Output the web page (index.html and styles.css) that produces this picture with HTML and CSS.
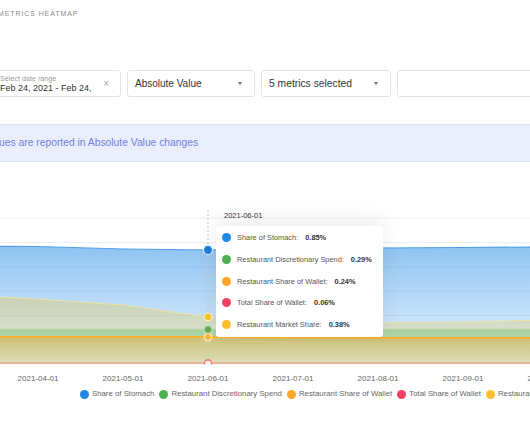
FILE: index.html
```html
<!DOCTYPE html>
<html lang="en">
<head>
  <meta charset="UTF-8" />
  <title>Metrics Heatmap</title>
  <link rel="stylesheet" href="styles.css">
</head>
<body>
  <div class="page">
    <div class="title">METRICS HEATMAP</div>

    <div class="filters">
      <div class="field date-field">
        <div class="date-text">
          <div class="field-label">Select date range</div>
          <div class="date-value">Feb 24, 2021 - Feb 24, 2022</div>
        </div>
        <span class="clear">×</span>
      </div>
      <div class="field select-field value-field">
        <span>Absolute Value</span>
        <span class="caret"></span>
      </div>
      <div class="field select-field metrics-field">
        <span>5 metrics selected</span>
        <span class="caret"></span>
      </div>
      <div class="field empty-field"></div>
    </div>

    <div class="banner">Values are reported in Absolute Value changes</div>

    <div class="chart">
      <svg class="chart-svg" viewBox="-30 195 560 195" width="560" height="195">
        <defs>
          <linearGradient id="gBlue" gradientUnits="userSpaceOnUse" x1="0" y1="246" x2="0" y2="364">
            <stop offset="0" stop-color="#1e88e5" stop-opacity="0.5"/>
            <stop offset="1" stop-color="#1e88e5" stop-opacity="0.08"/>
          </linearGradient>
          <linearGradient id="gYellow" gradientUnits="userSpaceOnUse" x1="0" y1="295" x2="0" y2="364">
            <stop offset="0" stop-color="#e9c640" stop-opacity="0.36"/>
            <stop offset="1" stop-color="#e9c640" stop-opacity="0.15"/>
          </linearGradient>
          <linearGradient id="gGreen" gradientUnits="userSpaceOnUse" x1="0" y1="328" x2="0" y2="364">
            <stop offset="0" stop-color="#4caf50" stop-opacity="0.35"/>
            <stop offset="1" stop-color="#4caf50" stop-opacity="0.1"/>
          </linearGradient>
          <linearGradient id="gOrange" gradientUnits="userSpaceOnUse" x1="0" y1="337" x2="0" y2="364">
            <stop offset="0" stop-color="#ffa726" stop-opacity="0.38"/>
            <stop offset="1" stop-color="#ffa726" stop-opacity="0.12"/>
          </linearGradient>
          <clipPath id="plot">
            <rect x="-30" y="200" width="560" height="164.5"/>
          </clipPath>
        </defs>

        <g class="grid">
          <line x1="-30" x2="530" y1="218" y2="218"/>
          <line x1="-30" x2="530" y1="242.5" y2="242.5"/>
          <line x1="-30" x2="530" y1="267" y2="267"/>
          <line x1="-30" x2="530" y1="291" y2="291"/>
          <line x1="-30" x2="530" y1="315.5" y2="315.5"/>
          <line x1="-30" x2="530" y1="340" y2="340"/>
        </g>

        <!-- share of stomach -->
        <path fill="url(#gBlue)" d="M-50 246 L38 246.5 L123 249 L208 250 L293 249 L378 248 L463 247.5 L548 247 L548 364 L-50 364 Z"/>
        <path class="line" stroke="#4f9ded" stroke-width="1.2" d="M-50 246 L38 246.5 L123 249 L208 250 L293 249 L378 248 L463 247.5 L548 247"/>

        <!-- restaurant market share -->
        <path fill="url(#gYellow)" d="M-50 294 L38 299 L123 305 L208 317 L293 322 L378 323 L463 322 L548 320 L548 364 L-50 364 Z"/>
        <path class="line" stroke="#ece3a6" stroke-width="1" d="M-50 294 L38 299 L123 305 L208 317 L293 322 L378 323 L463 322 L548 320"/>

        <!-- restaurant discretionary spend -->
        <path fill="url(#gGreen)" d="M-50 329 L548 329 L548 364 L-50 364 Z"/>
        <path class="line" stroke="#c3dcae" stroke-width="1" d="M-50 329 L548 329"/>

        <!-- restaurant share of wallet -->
        <path fill="url(#gOrange)" d="M-50 337 L208 337 L378 338 L548 338 L548 364 L-50 364 Z"/>
        <path class="line" stroke="#f6b12f" stroke-width="2" d="M-50 337 L208 337 L378 338 L548 338"/>

        <!-- total share of wallet -->
        <path class="line" stroke="#efa58f" stroke-width="1.5" d="M-50 363 L548 363"/>

        <line class="pointer" x1="208" x2="208" y1="210" y2="364"/>

        <g clip-path="url(#plot)">
          <circle cx="208" cy="363.5" r="3.6" fill="#fff" stroke="#f27a6f" stroke-width="1.6"/>
        </g>
        <circle cx="208" cy="337" r="4.5" fill="#fbe3a6"/>
        <circle cx="208" cy="337" r="2.8" fill="#f5b53a"/>
        <circle cx="208" cy="329.5" r="4" fill="#6caa58" stroke="#d4e6c2" stroke-width="1"/>
        <circle cx="208" cy="317" r="4.5" fill="#faeebb"/>
        <circle cx="208" cy="317" r="3.2" fill="#f3c531"/>
        <circle cx="208" cy="250" r="4.5" fill="#1e7fe0" stroke="#e4f0fc" stroke-width="1.2"/>

        <g class="axis-labels">
          <text x="38" y="381">2021-04-01</text>
          <text x="123" y="381">2021-05-01</text>
          <text x="208" y="381">2021-06-01</text>
          <text x="293" y="381">2021-07-01</text>
          <text x="378" y="381">2021-08-01</text>
          <text x="463" y="381">2021-09-01</text>
          <text x="548" y="381">2021-10-01</text>
        </g>
      </svg>

      <div class="tooltip">
        <div class="tooltip-date">2021-06-01</div>
        <div class="tooltip-body">
          <div class="tip-row"><span class="dot blue"></span>Share of Stomach:<b>0.85%</b></div>
          <div class="tip-row"><span class="dot green"></span>Restaurant Discretionary Spend:<b>0.29%</b></div>
          <div class="tip-row"><span class="dot orange"></span>Restaurant Share of Wallet:<b>0.24%</b></div>
          <div class="tip-row"><span class="dot red"></span>Total Share of Wallet:<b>0.06%</b></div>
          <div class="tip-row"><span class="dot yellow"></span>Restaurant Market Share:<b>0.38%</b></div>
        </div>
      </div>
    </div>

    <div class="legend">
      <div class="legend-item"><span class="dot blue"></span>Share of Stomach</div>
      <div class="legend-item"><span class="dot green"></span>Restaurant Discretionary Spend</div>
      <div class="legend-item"><span class="dot orange"></span>Restaurant Share of Wallet</div>
      <div class="legend-item"><span class="dot red"></span>Total Share of Wallet</div>
      <div class="legend-item"><span class="dot yellow"></span>Restaurant Market Share</div>
    </div>
  </div>
</body>
</html>
```

FILE: styles.css
```css
body {
  margin: 0;
  background: #fff;
  font-family: 'Liberation Sans', Arial, sans-serif;
  color: #333;
  overflow: hidden;
}

.page {
  width: 560px;
  margin-left: -30px;
}

.title {
  padding: 9px 0 0 28px;
  font-size: 7px;
  line-height: 9px;
  letter-spacing: 0.9px;
  color: #8a8a8a;
}

.filters {
  display: flex;
  gap: 6px;
  margin-top: 52px;
  height: 27px;
}

.field {
  flex: none;
  box-sizing: border-box;
  height: 27px;
  border: 1px solid #e3e3e3;
  border-radius: 3px;
  background: #fff;
  display: flex;
  align-items: center;
}

.date-field {
  width: 151px;
  padding-left: 29px;
  padding-right: 11px;
}

.date-text {
  width: 93px;
  overflow: hidden;
  white-space: nowrap;
}

.field-label {
  font-size: 7.2px;
  line-height: 8px;
  color: #9a9a9a;
}

.date-value {
  font-size: 9px;
  line-height: 10px;
  color: #333;
}

.clear {
  margin-left: auto;
  font-size: 10px;
  color: #a8a8a8;
}

.select-field {
  padding: 0 12px 0 7px;
  font-size: 10px;
  color: #333;
  justify-content: space-between;
}

.value-field {
  width: 128px;
}

.metrics-field {
  width: 130px;
  font-size: 10.3px;
}

.empty-field {
  width: 150px;
}

.caret {
  width: 0;
  height: 0;
  border-left: 2.5px solid transparent;
  border-right: 2.5px solid transparent;
  border-top: 3px solid #6a6a6a;
}

.banner {
  margin-top: 27px;
  height: 36px;
  line-height: 36px;
  background: #eaeefb;
  border-top: 1px solid #d8dff6;
  border-bottom: 1px solid #d8dff6;
  padding-left: 15px;
  font-size: 10.3px;
  color: #6f80e0;
}

.chart {
  position: relative;
  margin-top: 33px;
  height: 195px;
}

.chart-svg {
  display: block;
}

.grid line {
  stroke: #eceef3;
  stroke-width: 1;
}

.line {
  fill: none;
}

.pointer {
  stroke: #c9c9c9;
  stroke-width: 1;
  stroke-dasharray: 2 2;
}

.axis-labels text {
  font-family: 'Liberation Sans', Arial, sans-serif;
  font-size: 8px;
  fill: #666;
  text-anchor: middle;
}

.tooltip {
  position: absolute;
  left: 246px;
  top: 10px;
  width: 167px;
}

.tooltip-date {
  height: 21px;
  line-height: 21px;
  padding-left: 8px;
  font-size: 7.5px;
  color: #333;
}

.tooltip-body {
  box-sizing: border-box;
  width: 167px;
  height: 111px;
  padding: 1px 0 0 5.5px;
  background: #fff;
  border-radius: 3px;
  box-shadow: 0 -6px 22px rgba(0, 0, 0, 0.08);
}

.tip-row {
  display: flex;
  align-items: center;
  height: 21.7px;
  font-size: 7.4px;
  color: #555;
  white-space: nowrap;
}

.tip-row .dot {
  margin-right: 6.5px;
}

.tip-row b {
  margin-left: 7px;
  color: #333;
}

.dot {
  flex: none;
  width: 9px;
  height: 9px;
  border-radius: 50%;
}

.dot.blue { background: #1e88e5; }
.dot.green { background: #4caf50; }
.dot.orange { background: #ffa726; }
.dot.red { background: #f0415e; }
.dot.yellow { background: #fbc02d; }

.legend {
  display: flex;
  gap: 5px;
  padding-left: 110px;
  margin-top: -1px;
  height: 10px;
  white-space: nowrap;
}

.legend-item {
  display: flex;
  align-items: center;
  gap: 3px;
  font-size: 7.8px;
  line-height: 10px;
  color: #666;
}
```
